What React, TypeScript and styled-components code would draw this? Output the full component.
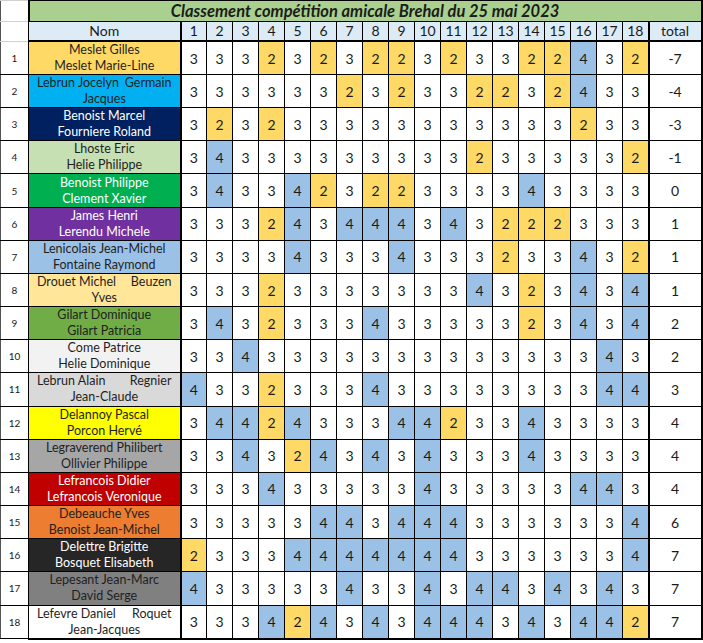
import styled, { createGlobalStyle } from 'styled-components'

const GlobalStyle = createGlobalStyle`
  body {
    margin: 0;
    background: #ffffff;
  }
`

const Page = styled.div`
  padding-right: 2px;
  font-family: Lato, 'Liberation Sans', sans-serif;
  color: #1a1a1a;
`

const Sheet = styled.table`
  border-collapse: collapse;
  table-layout: fixed;
  width: 701px;
`

const TitleRow = styled.tr`
  height: 21px;
`

const HeadRow = styled.tr`
  height: 19px;
`

const DataRow = styled.tr`
  height: 33.17px;
`

const BlankCell = styled.td`
  border-left: 1px solid #555;
  border-top: 1px solid #d0d0d0;
  border-bottom: 1px solid #d0d0d0;
  padding: 0;
  background: #ffffff;
`

const TitleCell = styled.td`
  background: #a9d08e;
  border: 1px solid #000;
  border-left: 2px solid #000;
  border-right: 2px solid #000;
  padding: 0;
  text-align: center;
  font-size: 16.5px;
  line-height: 19px;
  font-weight: 700;
  font-style: italic;
  color: #1c1c1c;
`

const HeadCell = styled.td<{ $thickRight?: boolean }>`
  background: #ddebf7;
  border: 1px solid #000;
  border-bottom: 2px solid #000;
  border-right: ${p => (p.$thickRight ? '2px' : '1px')} solid #000;
  padding: 0;
  text-align: center;
  font-size: 14px;
  line-height: 18px;
`

const IndexCell = styled.td`
  border: 1px solid #000;
  border-left: 1px solid #555;
  padding: 0;
  text-align: center;
  font-size: 10px;
  background: #ffffff;
`

const NameCell = styled.td<{ $bg: string; $light: boolean; $last?: boolean }>`
  background: ${p => p.$bg};
  color: ${p => (p.$light ? '#ffffff' : '#1f1f1f')};
  border: 1px solid #000;
  border-right: 2px solid #000;
  border-bottom: ${p => (p.$last ? '2px' : '1px')} solid #000;
  padding: 0 8px;
  font-size: 12.5px;
  line-height: 16px;
  vertical-align: middle;
`

const NameLine = styled.div<{ $spread?: boolean }>`
  display: flex;
  justify-content: ${p => (p.$spread ? 'space-between' : 'center')};
  white-space: nowrap;
`

const ScoreCell = styled.td<{ $score: string; $thickRight?: boolean; $last?: boolean }>`
  background: ${p => (p.$score === '2' ? '#ffd966' : p.$score === '4' ? '#9bc2e6' : '#ffffff')};
  border: 1px solid #000;
  border-right: ${p => (p.$thickRight ? '2px' : '1px')} solid #000;
  border-bottom: ${p => (p.$last ? '2px' : '1px')} solid #000;
  padding: 0;
  text-align: center;
  font-size: 14px;
`

const TotalCell = styled.td<{ $last?: boolean }>`
  border: 1px solid #000;
  border-right: 2px solid #000;
  border-bottom: ${p => (p.$last ? '2px' : '1px')} solid #000;
  padding: 0;
  text-align: center;
  font-size: 14px;
  background: #ffffff;
`

type Player = {
  first: string[]
  second: string
  bg: string
  light?: boolean
  scores: string
  total: string
}

// first line with two parts = Excel "distributed" text, pushed to both edges
const players: Player[] = [
  { first: ['Meslet Gilles'], second: 'Meslet Marie-Line', bg: '#ffd966', scores: '333232322323322432', total: '-7' },
  { first: ['Lebrun Jocelyn', 'Germain'], second: 'Jacques', bg: '#00b0f0', scores: '333333232332232433', total: '-4' },
  { first: ['Benoist Marcel'], second: 'Fourniere Roland', bg: '#002060', light: true, scores: '323233333333333233', total: '-3' },
  { first: ['Lhoste Eric'], second: 'Helie Philippe', bg: '#c6e0b4', scores: '343333333332333332', total: '-1' },
  { first: ['Benoist Philippe'], second: 'Clement Xavier', bg: '#00b050', light: true, scores: '343342322333343333', total: '0' },
  { first: ['James Henri'], second: 'Lerendu Michele', bg: '#7030a0', light: true, scores: '333243444343222333', total: '1' },
  { first: ['Lenicolais Jean-Michel'], second: 'Fontaine Raymond', bg: '#9bc2e6', scores: '333343334333233432', total: '1' },
  { first: ['Drouet Michel', 'Beuzen'], second: 'Yves', bg: '#ffe699', scores: '333233333334323434', total: '1' },
  { first: ['Gilart Dominique'], second: 'Gilart Patricia', bg: '#70ad47', scores: '343233343333323434', total: '2' },
  { first: ['Come Patrice'], second: 'Helie Dominique', bg: '#f2f2f2', scores: '334333333333333343', total: '2' },
  { first: ['Lebrun Alain', 'Regnier'], second: 'Jean-Claude', bg: '#d9d9d9', scores: '433233343333333344', total: '3' },
  { first: ['Delannoy Pascal'], second: 'Porcon Hervé', bg: '#ffff00', scores: '344243334423343333', total: '4' },
  { first: ['Legraverend Philibert'], second: 'Ollivier Philippe', bg: '#a6a6a6', scores: '334324343433343333', total: '4' },
  { first: ['Lefrancois Didier'], second: 'Lefrancois Veronique', bg: '#c00000', light: true, scores: '333433333433333443', total: '4' },
  { first: ['Debeauche Yves'], second: 'Benoist Jean-Michel', bg: '#ed7d31', scores: '333334434443333334', total: '6' },
  { first: ['Delettre Brigitte'], second: 'Bosquet Elisabeth', bg: '#262626', light: true, scores: '233344444443333334', total: '7' },
  { first: ['Lepesant Jean-Marc'], second: 'David Serge', bg: '#808080', scores: '433333433434434343', total: '7' },
  { first: ['Lefevre Daniel', 'Roquet'], second: 'Jean-Jacques', bg: '#ffffff', scores: '333424343444343442', total: '7' },
]

const holes = Array.from({ length: 18 }, (_, i) => i + 1)

export default function App() {
  return (
    <Page>
      <GlobalStyle />
      <Sheet>
        <colgroup>
          <col style={{ width: 28 }} />
          <col style={{ width: 152 }} />
          {holes.map(h => (
            <col key={h} style={{ width: 26 }} />
          ))}
          <col style={{ width: 53 }} />
        </colgroup>
        <tbody>
          <TitleRow>
            <BlankCell />
            <TitleCell colSpan={20}>Classement compétition amicale Brehal du 25 mai 2023</TitleCell>
          </TitleRow>
          <HeadRow>
            <BlankCell />
            <HeadCell $thickRight>Nom</HeadCell>
            {holes.map(h => (
              <HeadCell key={h} $thickRight={h === 18}>{h}</HeadCell>
            ))}
            <HeadCell $thickRight>total</HeadCell>
          </HeadRow>
          {players.map((p, i) => {
            const last = i === players.length - 1
            return (
              <DataRow key={i}>
                <IndexCell>{i + 1}</IndexCell>
                <NameCell $bg={p.bg} $light={!!p.light} $last={last}>
                  <NameLine $spread={p.first.length > 1}>
                    {p.first.map(part => (
                      <span key={part}>{part}</span>
                    ))}
                  </NameLine>
                  <NameLine>{p.second}</NameLine>
                </NameCell>
                {p.scores.split('').map((s, j) => (
                  <ScoreCell key={j} $score={s} $thickRight={j === 17} $last={last}>
                    {s}
                  </ScoreCell>
                ))}
                <TotalCell $last={last}>{p.total}</TotalCell>
              </DataRow>
            )
          })}
        </tbody>
      </Sheet>
    </Page>
  )
}
